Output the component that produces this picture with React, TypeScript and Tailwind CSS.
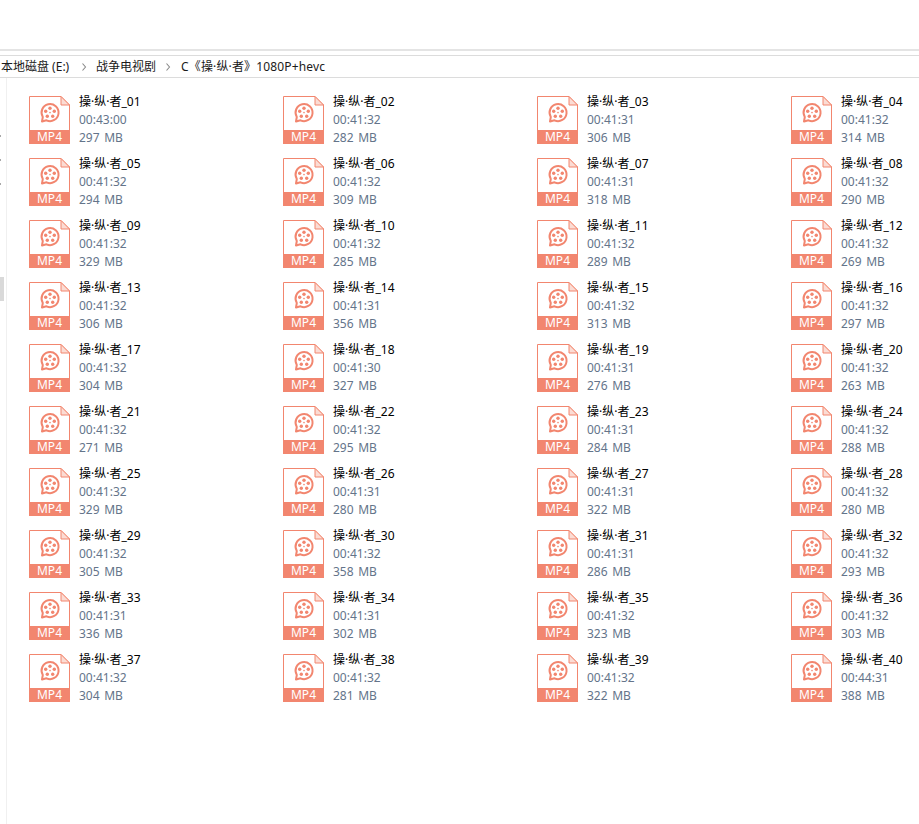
import React from 'react';

const files: [string, number][] = [
  ['00:43:00', 297], ['00:41:32', 282], ['00:41:31', 306], ['00:41:32', 314],
  ['00:41:32', 294], ['00:41:32', 309], ['00:41:31', 318], ['00:41:32', 290],
  ['00:41:32', 329], ['00:41:32', 285], ['00:41:32', 289], ['00:41:32', 269],
  ['00:41:32', 306], ['00:41:31', 356], ['00:41:32', 313], ['00:41:32', 297],
  ['00:41:32', 304], ['00:41:30', 327], ['00:41:31', 276], ['00:41:32', 263],
  ['00:41:32', 271], ['00:41:32', 295], ['00:41:31', 284], ['00:41:32', 288],
  ['00:41:32', 329], ['00:41:31', 280], ['00:41:31', 322], ['00:41:32', 280],
  ['00:41:32', 305], ['00:41:32', 358], ['00:41:31', 286], ['00:41:32', 293],
  ['00:41:31', 336], ['00:41:31', 302], ['00:41:32', 323], ['00:41:32', 303],
  ['00:41:32', 304], ['00:41:32', 281], ['00:41:32', 322], ['00:44:31', 388],
];

const font = "font-['Segoe_UI','Noto_Sans','Noto_Sans_CJK_SC',sans-serif]";

const Mp4Icon = () => (
  <svg width="41" height="48" viewBox="0 0 41 48" className="shrink-0">
    <path d="M0.5 0.5H32L40.5 9V47.5H0.5Z" fill="#fff" stroke="#f2866f" />
    <path d="M32 0.5V9H40.5Z" fill="#fbdcd4" stroke="#f2866f" />
    <rect x="0" y="34" width="41" height="14" fill="#f2866f" />
    <text x="20.5" y="44.5" textAnchor="middle" fontSize="12" fill="#fff" fontFamily="'Noto Sans', sans-serif">MP4</text>
    <path d="M13 25.5L13.8 21A8.5 8.5 0 1 1 17.5 24.3Z" fill="none" stroke="#f2866f" strokeWidth="2" strokeLinejoin="round" />
    <circle cx="21" cy="12.2" r="1.7" fill="#f2866f" />
    <circle cx="25.3" cy="15.2" r="1.7" fill="#f2866f" />
    <circle cx="23.7" cy="20.2" r="1.7" fill="#f2866f" />
    <circle cx="18.3" cy="20.2" r="1.7" fill="#f2866f" />
    <circle cx="16.7" cy="15.2" r="1.7" fill="#f2866f" />
    <circle cx="21" cy="16.6" r="0.8" fill="#f2866f" />
  </svg>
);

const Chevron = () => (
  <svg width="6" height="8" viewBox="0 0 6 8" className="shrink-0">
    <path d="M1.5 0.5L4.5 4L1.5 7.5" fill="none" stroke="#8a8a8a" strokeWidth="1.1" />
  </svg>
);

const FileItem = ({ index, duration, size }: { index: number; duration: string; size: number }) => (
  <div className="flex h-[62px] w-[254px] gap-[9px]">
    <div className="pt-[3px]">
      <Mp4Icon />
    </div>
    <div className="flex flex-col text-xs leading-[18px] whitespace-nowrap">
      <span className="text-black">操·纵·者_{String(index).padStart(2, '0')}</span>
      <span className="text-[#64748a]">{duration}</span>
      <span className="text-[#64748a] [word-spacing:1.5px]">{size} MB</span>
    </div>
  </div>
);

export default function App() {
  return (
    <div className={`flex h-[824px] w-[919px] flex-col overflow-hidden bg-white ${font}`}>
      {/* Ribbon edge */}
      <div className="h-[49px] shrink-0" />
      <div className="h-[2px] shrink-0 bg-[#e4e4e4]" />
      <div className="h-[4px] shrink-0" />

      {/* Address bar */}
      <div className="flex h-[23px] shrink-0 items-center border-y border-[#dcdcdc] pl-px text-xs text-[#1a1a1a] whitespace-nowrap">
        <span className="w-[80px]">本地磁盘 (E:)</span>
        <Chevron />
        <span className="ml-[9px] w-[69px]">战争电视剧</span>
        <Chevron />
        <span className="ml-[10px] tracking-[0.15px]">C《操·纵·者》1080P+hevc</span>
      </div>

      <div className="flex min-h-0 flex-1">
        {/* Navigation pane sliver */}
        <div className="flex w-[7px] shrink-0 flex-col border-r border-[#f0f0f0]">
          <div className="mt-[57px] h-[2px] w-px bg-[#a8a8a8]" />
          <div className="mt-[22px] h-[2px] w-px bg-[#a8a8a8]" />
          <div className="mt-[22px] h-[2px] w-px bg-[#a8a8a8]" />
          <div className="mt-[92px] h-[24px] w-[4px] bg-[#d9d9d9]" />
        </div>

        {/* Files */}
        <div className="grid flex-1 grid-cols-[repeat(4,254px)] content-start pl-[22px] pt-[15px]">
          {files.map(([duration, size], i) => (
            <FileItem key={i} index={i + 1} duration={duration} size={size} />
          ))}
        </div>
      </div>
    </div>
  );
}
